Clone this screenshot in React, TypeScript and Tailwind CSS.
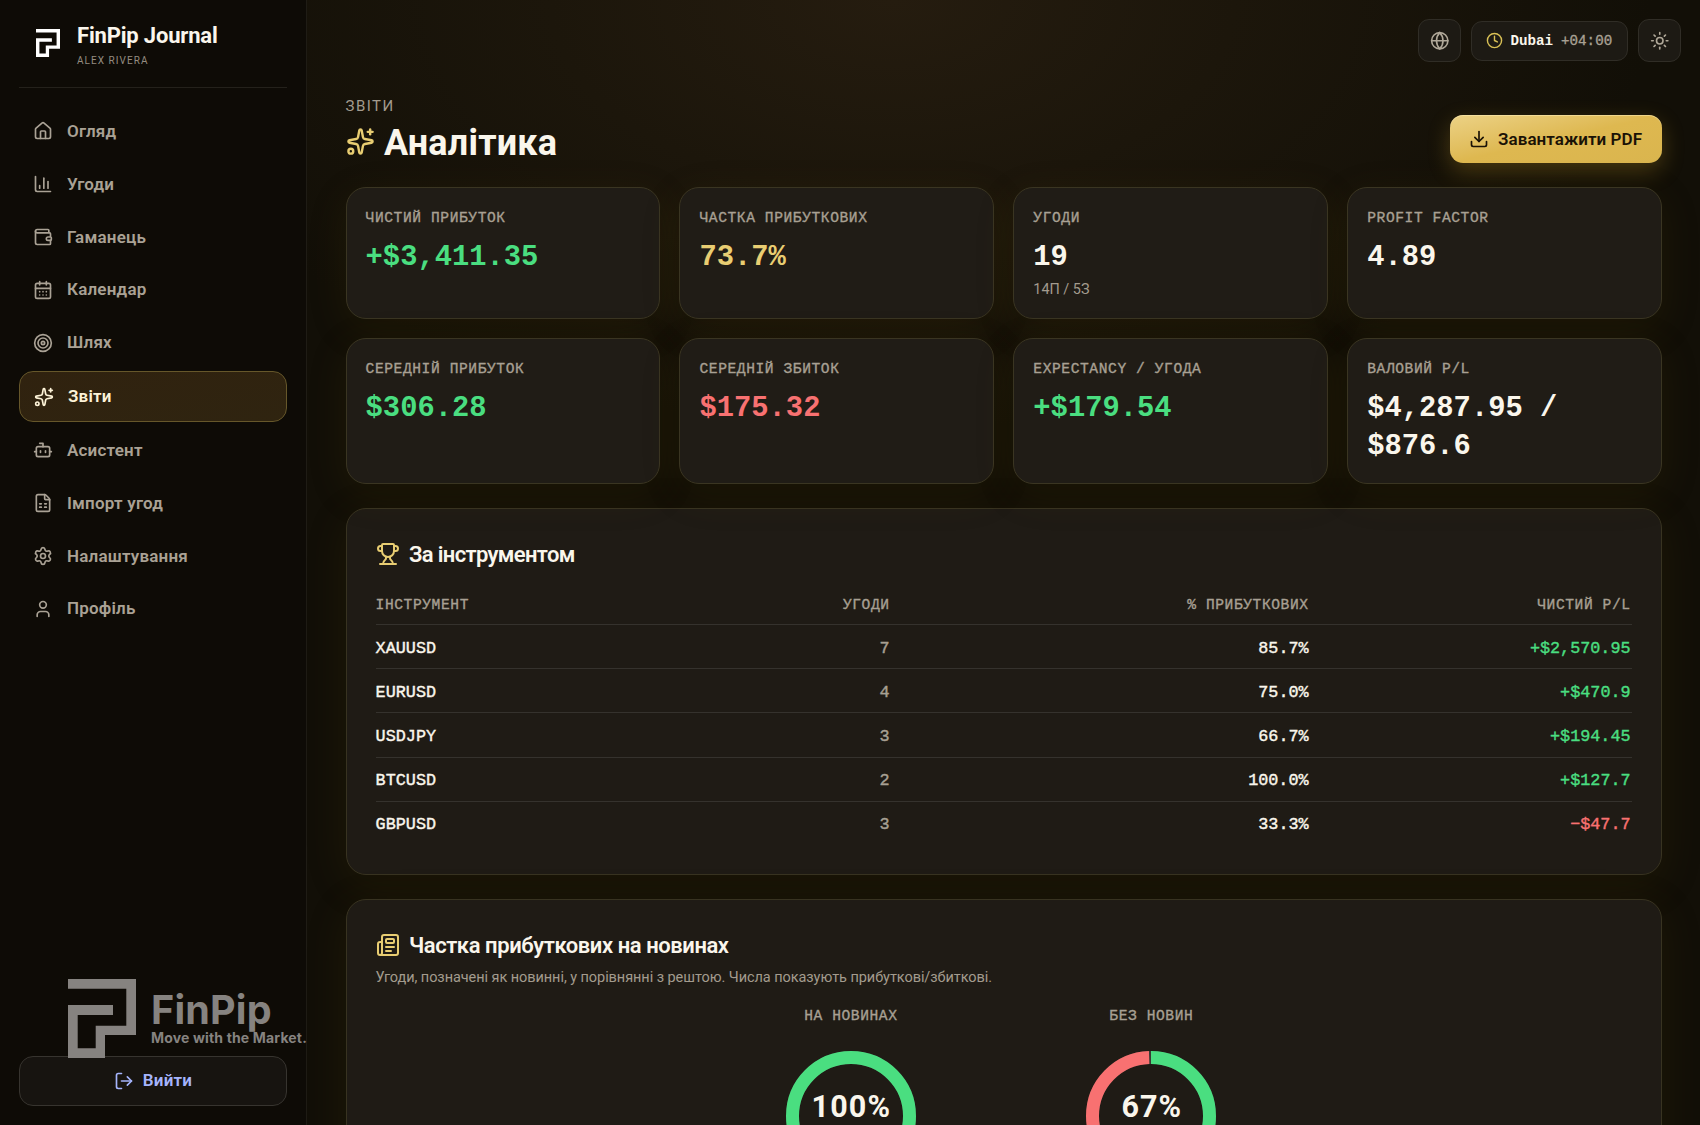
import React from "react";
import {
  House, ChartColumn, Wallet, CalendarDays, Target, Sparkles, Bot, FileSpreadsheet,
  Settings, User, LogOut, Globe, Clock, Sun, Download, Trophy, Newspaper,
} from "lucide-react";

const LOGO =
  "M0 0H68V56H37V79H0V26H45V36H9.7V69.3H27.7V46.7H58.3V9.7H0Z";

const nav = [
  { label: "Огляд", icon: House },
  { label: "Угоди", icon: ChartColumn },
  { label: "Гаманець", icon: Wallet },
  { label: "Календар", icon: CalendarDays },
  { label: "Шлях", icon: Target },
  { label: "Звіти", icon: Sparkles, active: true },
  { label: "Асистент", icon: Bot },
  { label: "Імпорт угод", icon: FileSpreadsheet },
  { label: "Налаштування", icon: Settings },
  { label: "Профіль", icon: User },
];

const MONO = "font-['Liberation_Mono',monospace]";
const LABEL =
  "font-['Liberation_Mono',monospace] text-[14.6px] tracking-[0.58px] text-[#a8a093] [-webkit-text-stroke:0.35px_currentColor]";
const PANEL =
  "rounded-[20px] border border-[#383321] bg-[#1f1b15] shadow-[0_10px_44px_rgba(110,84,0,0.13)]";

const stats = [
  { label: "ЧИСТИЙ ПРИБУТОК", value: "+$3,411.35", color: "text-[#4ade80]" },
  { label: "ЧАСТКА ПРИБУТКОВИХ", value: "73.7%", color: "text-[#e8cd72]" },
  { label: "УГОДИ", value: "19", color: "text-[#faf6ec]", note: "14П / 5З" },
  { label: "PROFIT FACTOR", value: "4.89", color: "text-[#faf6ec]" },
  { label: "СЕРЕДНІЙ ПРИБУТОК", value: "$306.28", color: "text-[#4ade80]" },
  { label: "СЕРЕДНІЙ ЗБИТОК", value: "$175.32", color: "text-[#f87171]" },
  { label: "EXPECTANCY / УГОДА", value: "+$179.54", color: "text-[#4ade80]" },
  { label: "ВАЛОВИЙ P/L", value: "$4,287.95 / $876.6", color: "text-[#faf6ec]" },
];

const rows = [
  { symbol: "XAUUSD", trades: "7", rate: "85.7%", net: "+$2,570.95" },
  { symbol: "EURUSD", trades: "4", rate: "75.0%", net: "+$470.9" },
  { symbol: "USDJPY", trades: "3", rate: "66.7%", net: "+$194.45" },
  { symbol: "BTCUSD", trades: "2", rate: "100.0%", net: "+$127.7" },
  { symbol: "GBPUSD", trades: "3", rate: "33.3%", net: "−$47.7" },
];

function Donut({ title, percent, label }: { title: string; percent: number; label: string }) {
  const c = 2 * Math.PI * 58.5;
  const full = percent === 100;
  const loss = (c * (100 - percent)) / 100;
  return (
    <div className="flex w-[300.5px] flex-col items-center">
      <div className={`${LABEL} leading-[20px]`}>{title}</div>
      <div className="relative mt-[25px] size-[130px]">
        <svg viewBox="0 0 130 130" className="size-full -rotate-90">
          <circle cx="65" cy="65" r="58.5" fill="none" strokeWidth="13" stroke="#3a3a34" />
          <circle cx="65" cy="65" r="58.5" fill="none" strokeWidth="13" stroke="#4ade80" strokeDasharray={full ? undefined : `${c - loss} ${c}`} />
          {!full && (
            <circle cx="65" cy="65" r="58.5" fill="none" strokeWidth="13" stroke="#f87171" strokeDasharray={`${loss - 2.5} ${c}`} strokeDashoffset={-(c - loss)} />
          )}
        </svg>
        <div className="absolute inset-x-0 top-[38px] pl-[1px] text-center text-[30.5px] leading-[36px] font-bold tracking-[1.1px] text-[#faf6ec]">
          {label}
        </div>
      </div>
    </div>
  );
}

export default function App() {
  return (
    <div className="flex h-[1125px] w-[1700px] overflow-hidden bg-[#120f07] font-[Roboto,sans-serif] text-[#faf6ec]">
      <aside className="flex w-[307px] shrink-0 flex-col border-r border-[#1f1c15] bg-[#0e0b06] pr-[19px] pl-[19px]">
        <div className="flex h-[88px] items-start border-b border-[#24211b] pl-[17px]">
          <svg viewBox="0 0 68 79" className="mt-[29px] h-[28px] w-[24px]" fill="#ffffff">
            <path d={LOGO} />
          </svg>
          <div className="ml-[17px] pt-[22px]">
            <div className="text-[22px] leading-[28px] font-bold tracking-[-0.18px]">FinPip Journal</div>
            <div className="mt-[4px] text-[10px] leading-[14px] tracking-[1.05px] text-[#958d81]">ALEX RIVERA</div>
          </div>
        </div>
        <nav className="mt-[19px] flex flex-col gap-[4.3px]">
          {nav.map(({ label, icon: Icon, active }) => (
            <div
              key={label}
              className={
                active
                  ? "flex h-[50.2px] items-center rounded-[14px] border border-[#66572a] bg-linear-to-br from-[#30220f] to-[#2f2410] pl-[14.2px] text-[#fdf3d8]"
                  : "flex h-[48.6px] items-center pl-[14.2px] text-[#aaa295]"
              }
            >
              <Icon className="size-[20px]" />
              <span className="-mt-[1px] ml-[13.8px] text-[17px] leading-[24px] font-semibold tracking-[0.2px]">{label}</span>
            </div>
          ))}
        </nav>
        <div className="mt-auto mb-[19px]">
          <div className="relative flex h-[77.4px] pl-[49px]">
            <svg viewBox="0 0 68 79" className="h-[79px] w-[68px] shrink-0" fill="#868380">
              <path d={LOGO} />
            </svg>
            <div className="ml-[15px] pt-[12px] font-[Inter,sans-serif] font-bold whitespace-nowrap text-[#868380]">
              <div className="text-[39.5px] leading-[38px] tracking-[0.2px]">FinPip</div>
              <div className="text-[14px] leading-[18px] tracking-[0.16px]">Move with the Market.</div>
            </div>
          </div>
          <button className="flex h-[50px] w-full items-center justify-center rounded-[14px] border border-[#37342f] bg-[#171410] text-[#a5b4fc]">
            <LogOut className="size-[20px]" />
            <span className="ml-[9px] text-[17px] font-semibold tracking-[0.2px]">Вийти</span>
          </button>
        </div>
      </aside>

      <main className="relative h-full flex-1 bg-[radial-gradient(ellipse_760px_430px_at_42%_0%,#251c0f_0%,#1c160b_45%,#120f07_100%)] pl-[38.6px]">
        <div className="flex h-[81px] items-center justify-end gap-[10px] pr-[19px]">
          <button className="flex size-[43px] items-center justify-center rounded-[11px] border border-[#302d26] bg-[#1d1a14] text-[#b0a899]">
            <Globe className="size-[19.5px]" />
          </button>
          <div className={`flex h-[40px] w-[157px] items-center rounded-[11px] border border-[#302d26] bg-[#1d1a14] pl-[13.5px] text-[14.200px] ${MONO}`}>
            <Clock className="size-[17px] text-[#d9c055]" />
            <span className="mt-[2px] ml-[8px] font-bold">Dubai</span>
            <span className="mt-[2px] ml-[8px] text-[#a8a093] [-webkit-text-stroke:0.35px_currentColor]">+04:00</span>
          </div>
          <button className="flex size-[43px] items-center justify-center rounded-[11px] border border-[#302d26] bg-[#1d1a14] text-[#b0a899]">
            <Sun className="size-[19.5px]" />
          </button>
        </div>

        <div className="w-[1316px]">
          <div className="flex h-[106px] justify-between">
            <div className="pt-[15px]">
              <div className="text-[15px] leading-[20px] tracking-[1.450px] text-[#a39b8e]">ЗВІТИ</div>
              <div className="flex items-center pt-[5px]">
                <Sparkles className="-mt-[3px] size-[29px] text-[#e8cd72]" />
                <h1 className="ml-[9.4px] text-[36px] leading-[44px] font-bold tracking-[0.2px]">Аналітика</h1>
              </div>
            </div>
            <button className="mt-[34px] flex h-[48px] w-[212px] items-center justify-center rounded-[13px] bg-linear-to-br from-[#ecd285] via-[#deb850] to-[#dab54e] text-[#1a1206] shadow-[0_8px_22px_rgba(212,165,40,0.28),inset_0_1px_0_rgba(255,240,190,0.5)]">
              <Download className="size-[20px]" />
              <span className="mt-px ml-[9px] text-[17px] font-semibold tracking-[0.05px]">Завантажити PDF</span>
            </button>
          </div>

          <div className="grid grid-cols-4 grid-rows-[132px_146px] gap-x-[19.5px] gap-y-[19px]">
            {stats.map((s) => (
              <div key={s.label} className="rounded-[20px] border border-[#3a3522] bg-[#201c16] px-[19px] pt-[20px] shadow-[0_10px_40px_rgba(110,84,0,0.13)]">
                <div className={`${LABEL} leading-[20px]`}>{s.label}</div>
                <div className={`mt-[11px] text-[28.800px] leading-[38px] font-bold ${MONO} ${s.color}`}>{s.value}</div>
                {s.note && <div className="mt-[3px] text-[14.4px] leading-[20px] text-[#a39b8e]">{s.note}</div>}
              </div>
            ))}
          </div>

          <section className={`mt-[24px] h-[367px] px-[29px] pt-[30px] ${PANEL}`}>
            <div className="flex h-[30px] items-center">
              <Trophy className="size-[24px] text-[#e8cd72]" />
              <h2 className="ml-[9.4px] text-[22px] font-semibold tracking-[-0.65px]">За інструментом</h2>
            </div>
            <div className={`mt-[21px] grid h-[35px] grid-cols-[315px_199px_419px_1fr] border-b border-[#35322d] pt-[5px] pr-px leading-[21px] ${LABEL}`}>
              <span>ІНСТРУМЕНТ</span>
              <span className="text-right">УГОДИ</span>
              <span className="text-right">% ПРИБУТКОВИХ</span>
              <span className="text-right">ЧИСТИЙ P/L</span>
            </div>
            {rows.map((r, i) => (
              <div
                key={r.symbol}
                className={`grid h-[44.2px] grid-cols-[315px_199px_419px_1fr] items-center pt-[3px] pr-px text-[16.800px] [-webkit-text-stroke:0.4px_currentColor] ${MONO} ${i < 4 ? "border-b border-[#35322d]" : "pb-[2px]"}`}
              >
                <span>{r.symbol}</span>
                <span className="text-right text-[#a8a093]">{r.trades}</span>
                <span className="text-right">{r.rate}</span>
                <span className={`text-right ${r.net[0] === "+" ? "text-[#4ade80]" : "text-[#f87171]"}`}>{r.net}</span>
              </div>
            ))}
          </section>

          <section className={`mt-[24px] h-[420px] px-[29px] pt-[30px] ${PANEL}`}>
            <div className="flex h-[30px] items-center">
              <Newspaper className="size-[24px] text-[#e8cd72]" />
              <h2 className="ml-[9.4px] text-[22px] font-semibold tracking-[-0.43px]">Частка прибуткових на новинах</h2>
            </div>
            <p className="mt-[7px] text-[14.5px] leading-[22px] tracking-[-0.06px] text-[#a39b8e]">
              Угоди, позначені як новинні, у порівнянні з рештою. Числа показують прибуткові/збиткові.
            </p>
            <div className="mt-[16.5px] flex justify-center pr-[5px]">
              <Donut title="НА НОВИНАХ" percent={100} label="100%" />
              <Donut title="БЕЗ НОВИН" percent={67} label="67%" />
            </div>
          </section>
        </div>
      </main>
    </div>
  );
}
